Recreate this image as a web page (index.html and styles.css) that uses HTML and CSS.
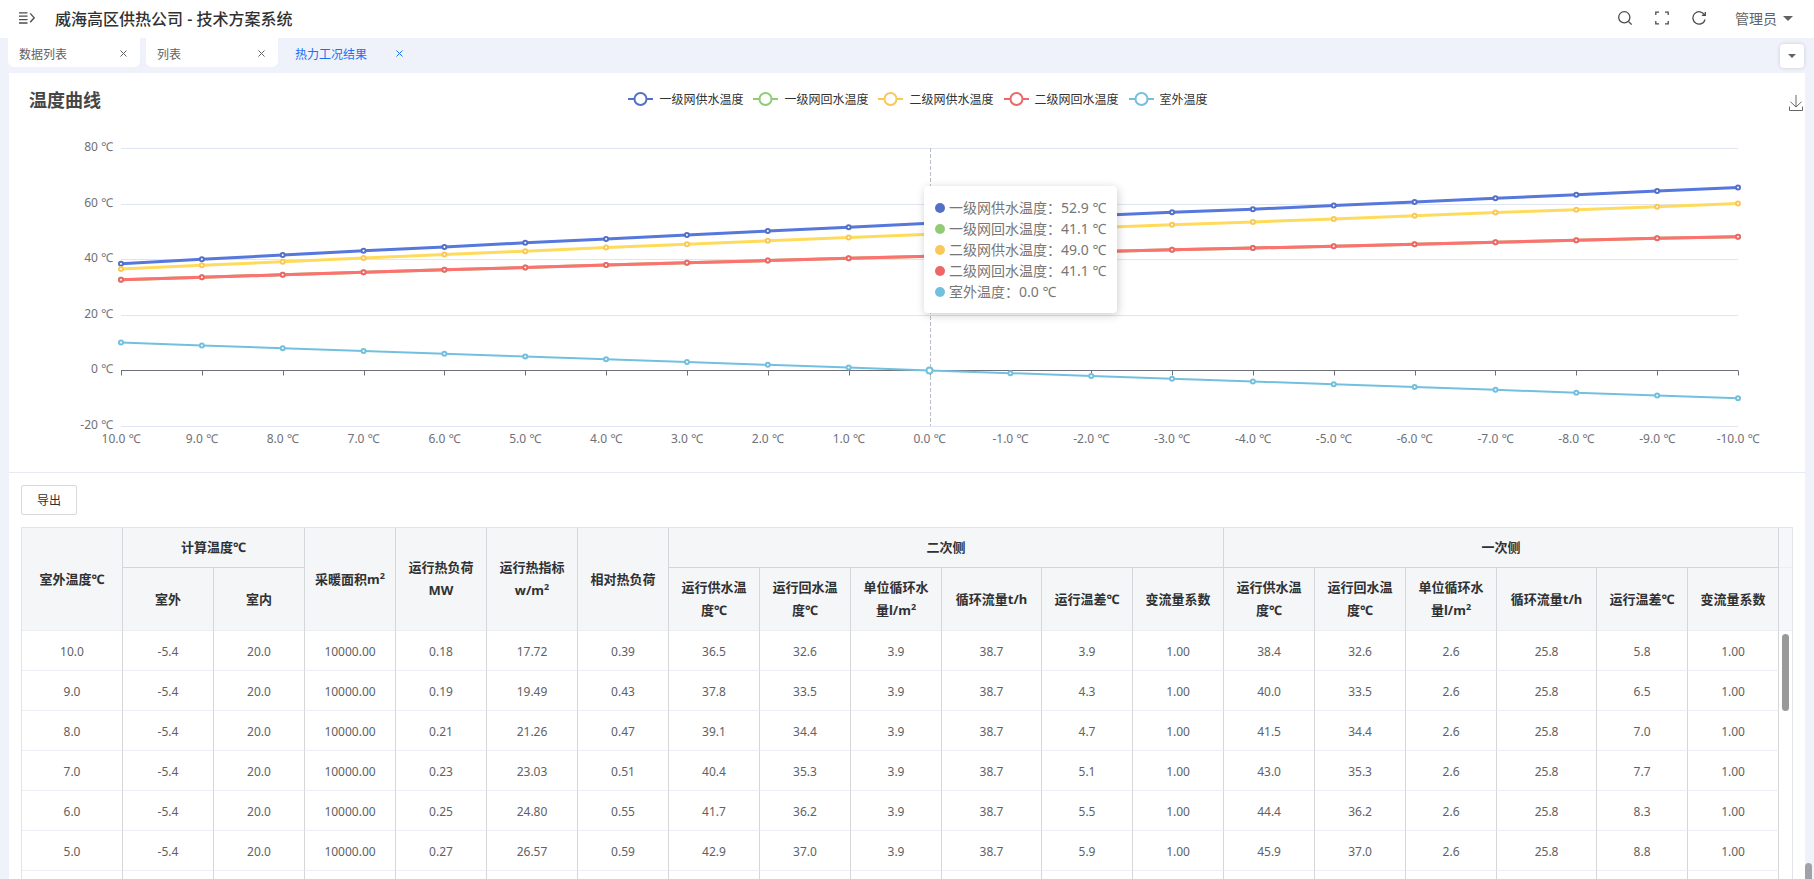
FILE: index.html
```html
<!doctype html>
<html lang="zh-CN">
<head>
<meta charset="utf-8">
<title>威海高区供热公司 - 技术方案系统</title>
<link rel="stylesheet" href="styles.css">
</head>

<body>
	<header class="header">
		<button class="icon-btn" aria-label="展开菜单">
			<svg width="16" height="12" viewBox="0 0 16 12"><path d="M0 .8h8.500M0 4.200h8.500M0 7.600h8.500M0 11h8.500M11.200 1.400l4 4.400-4 4.400"/></svg>
		</button>
		<h1>威海高区供热公司 - 技术方案系统</h1>
		<div class="tools">
			<button class="icon-btn" aria-label="搜索">
				<svg width="14" height="14" viewBox="0 0 14 14"><circle cx="6.300" cy="6.300" r="5.600"/><path d="M10.400 10.400l3.200 3.200"/></svg>
			</button>
			<button class="icon-btn" aria-label="全屏">
				<svg width="14" height="14" viewBox="0 0 14 14"><path d="M.8 4V1.200H4M10 1.200h3.200V4M13.200 10v2.800H10M4 12.800H.8V10"/></svg>
			</button>
			<button class="icon-btn" aria-label="刷新">
				<svg width="14" height="14" viewBox="0 0 14 14"><path d="M12.600 4A6.200 6.200 0 1 0 13.100 8.500M13.300 1v3.400H9.900"/></svg>
			</button>
			<button class="user">管理员<i class="caret"></i></button>
		</div>
	</header>

	<nav class="tabs">
		<div class="tab"><a href="#">数据列表</a><button class="close" aria-label="关闭数据列表"><svg width="7" height="7" viewBox="0 0 7 7"><path d="M.5.5l6 6M6.500.5l-6 6"/></svg></button></div>
		<div class="tab"><a href="#">列表</a><button class="close" aria-label="关闭列表"><svg width="7" height="7" viewBox="0 0 7 7"><path d="M.5.5l6 6M6.500.5l-6 6"/></svg></button></div>
		<div class="tab active"><a href="#">热力工况结果</a><button class="close" aria-label="关闭热力工况结果"><svg width="7" height="7" viewBox="0 0 7 7"><path d="M.5.5l6 6M6.500.5l-6 6"/></svg></button></div>
		<button class="more" aria-label="更多标签"><i class="caret"></i></button>
	</nav>

	<main class="panel">
		<section class="chart">
			<div class="chart-head">
				<h2>温度曲线</h2>
				<ul class="legend" id="legend"></ul>
				<button class="icon-btn download" aria-label="保存为图片">
					<svg width="14" height="16" viewBox="0 0 14 16"><path d="M7 0v12M1.500 6.800L7 12l5.500-5.200M.5 11.500v4h13v-4"/></svg>
				</button>
			</div>
			<svg class="plot" id="plot"></svg>
			<div class="tooltip" id="tooltip"></div>
		</section>

		<section class="result">
			<button class="export">导出</button>
			<div class="table-box">
				<table>
					<colgroup>
						<col class="w-first"><col span="9">
						<col class="w-flow"><col span="5">
						<col class="w-flow"><col span="2">
						<col class="w-bar">
					</colgroup>
					<thead>
						<tr>
							<th rowspan="2">室外温度℃</th>
							<th colspan="2" class="group">计算温度℃</th>
							<th rowspan="2">采暖面积m<sup>2</sup></th>
							<th rowspan="2">运行热负荷MW</th>
							<th rowspan="2">运行热指标w/m<sup>2</sup></th>
							<th rowspan="2">相对热负荷</th>
							<th colspan="6" class="group">二次侧</th>
							<th colspan="6" class="group">一次侧</th>
							<td class="gutter"></td>
						</tr>
						<tr>
							<th>室外</th>
							<th>室内</th>
							<th>运行供水温度℃</th>
							<th>运行回水温度℃</th>
							<th>单位循环水量l/m<sup>2</sup></th>
							<th>循环流量t/h</th>
							<th>运行温差℃</th>
							<th>变流量系数</th>
							<th>运行供水温度℃</th>
							<th>运行回水温度℃</th>
							<th>单位循环水量l/m<sup>2</sup></th>
							<th>循环流量t/h</th>
							<th>运行温差℃</th>
							<th>变流量系数</th>
							<td class="gutter"></td>
						</tr>
					</thead>
					<tbody id="rows"></tbody>
				</table>
				<i class="thumb"></i>
			</div>
		</section>
	</main>
	<i class="page-thumb"></i>

	<script>
	//各曲线数据，室外温度从10到-10
	var series=[
		{name:'一级网供水温度',color:'#5470c6',line:'#5677dc',width:3,
		data:[38.4,40.0,41.5,43.0,44.4,45.9,47.3,48.7,50.1,51.5,52.9,54.2,55.6,56.9,58.0,59.3,60.6,61.9,63.2,64.5,65.8]},
		{name:'一级网回水温度',color:'#91cc75',line:'#91cc75',width:3,
		data:[32.6,33.5,34.4,35.3,36.2,37.0,37.9,38.7,39.5,40.3,41.1,41.9,42.7,43.4,44.0,44.7,45.4,46.1,46.8,47.5,48.1]},
		{name:'二级网供水温度',color:'#fac858',line:'#ffdb5c',width:3,
		data:[36.5,37.8,39.1,40.4,41.7,42.9,44.2,45.4,46.6,47.8,49.0,50.2,51.3,52.4,53.4,54.5,55.6,56.8,57.8,58.9,60.0]},
		{name:'二级网回水温度',color:'#ee6666',line:'#ff7070',width:3,
		data:[32.6,33.5,34.4,35.3,36.2,37.0,37.9,38.7,39.5,40.3,41.1,41.9,42.7,43.4,44.0,44.7,45.4,46.1,46.8,47.5,48.1]},
		{name:'室外温度',color:'#73c0de',line:'#73c0de',width:2,
		data:[10,9,8,7,6,5,4,3,2,1,0,-1,-2,-3,-4,-5,-6,-7,-8,-9,-10]}
	];
	var hover=10;//当前指向的点

	//图例和提示框
	var legend=document.getElementById('legend');
	var tooltip=document.getElementById('tooltip');
	series.forEach(function(s){
		legend.innerHTML+='<li><svg width="25" height="14"><path d="M0 7h25" stroke="'+s.color+'" stroke-width="2"/><circle cx="12.5" cy="7" r="6" fill="#fff" stroke="'+s.color+'" stroke-width="2"/></svg>'+s.name+'</li>';
		tooltip.innerHTML+='<div><i style="background:'+s.color+'"></i>'+s.name+'：'+s.data[hover].toFixed(1)+' ℃</div>';
	});

	var plot=document.getElementById('plot');
	function draw(){
		var left=112,right=plot.clientWidth-67,top=18,h=278;
		var step=(right-left)/20;
		function px(i){ return left+step*i; }
		function py(v){ return top+(80-v)*h/100; }
		var s='';
		for(var v=80;v>=-20;v-=20){
			var y=Math.round(py(v))+0.5;
			if(v!=0) s+='<path d="M'+left+' '+y+'H'+right+'" stroke="#e0e6f1"/>';
			s+='<text x="'+(left-8)+'" y="'+(y+2)+'" text-anchor="end">'+v+' ℃</text>';
		}
		//横轴
		var zero=Math.round(py(0))+0.5;
		s+='<path d="M'+left+' '+zero+'H'+right+'" stroke="#6e7079"/>';
		for(var i=0;i<=20;i++){
			var x=Math.round(px(i))+0.5;
			s+='<path d="M'+x+' '+zero+'v5" stroke="#6e7079"/>';
			s+='<text x="'+px(i)+'" y="'+(top+h+17)+'" text-anchor="middle">'+(10-i).toFixed(1)+' ℃</text>';
		}
		s+='<path d="M'+(Math.round(px(hover))+0.5)+' '+top+'v'+h+'" stroke="#b9bec9" stroke-dasharray="4 2"/>';
		//曲线
		series.forEach(function(item){
			var pts=item.data.map(function(v,i){ return px(i)+','+py(v); });
			s+='<polyline points="'+pts.join(' ')+'" fill="none" stroke="'+item.line+'" stroke-width="'+item.width+'"/>';
			item.data.forEach(function(v,i){
				s+='<circle cx="'+px(i)+'" cy="'+py(v)+'" r="'+(i==hover?3:2)+'" fill="#fff" stroke="'+item.color+'" stroke-width="2"/>';
			});
		});
		plot.innerHTML=s;
	}
	draw();
	window.onresize=draw;

	//表格：负荷、热指标、相对负荷、二次温差、一次温差
	var load=[
		['0.18','17.72','0.39','3.9','5.8'],
		['0.19','19.49','0.43','4.3','6.5'],
		['0.21','21.26','0.47','4.7','7.0'],
		['0.23','23.03','0.51','5.1','7.7'],
		['0.25','24.80','0.55','5.5','8.3'],
		['0.27','26.57','0.59','5.9','8.8'],
		['0.28','28.35','0.63','6.3','9.4']
	];
	var html='';
	load.forEach(function(r,i){
		var back=series[1].data[i].toFixed(1);
		var cells=[(10-i).toFixed(1),'-5.4','20.0','10000.00',r[0],r[1],r[2],
			series[2].data[i].toFixed(1),back,'3.9','38.7',r[3],'1.00',
			series[0].data[i].toFixed(1),back,'2.6','25.8',r[4],'1.00'];
		html+='<tr><td>'+cells.join('</td><td>')+'</td></tr>';
	});
	document.getElementById('rows').innerHTML=html;
	</script>
</body>
</html>
```
FILE: styles.css
```css
*{
	box-sizing: border-box;
}
body{
	margin: 0;
	height: 100vh;
	overflow: hidden;
	display: flex;
	flex-direction: column;
	background: #eff2fb;
	color: #606266;
	font-family: "Noto Sans", "Noto Sans CJK SC", sans-serif;
	font-size: 12px;
}
button{
	border: 0;
	padding: 0;
	background: none;
	color: inherit;
	font: inherit;
	cursor: pointer;
}
a{
	color: inherit;
	text-decoration: none;
}
h1, h2, ul{
	margin: 0;
	padding: 0;
}
svg{
	display: block;
}

/* 顶栏 */
.header{
	flex: none;
	display: flex;
	align-items: center;
	height: 38px;
	padding: 0 21px 2px 19px;
	background: #fff;
}
.header h1{
	margin-left: 20px;
	font-size: 16px;
	font-weight: 500;
	color: #303133;
}
.icon-btn svg, .close svg{
	fill: none;
	stroke: #4a4c50;
	stroke-width: 1.3;
}
.tools{
	display: flex;
	align-items: center;
	gap: 23px;
	margin-left: auto;
}
.user{
	display: flex;
	align-items: center;
	gap: 6px;
	margin-left: 6px;
	font-size: 14px;
}
.caret{
	border: 5px solid transparent;
	border-top-color: #606266;
	border-bottom: 0;
}

/* 标签页 */
.tabs{
	flex: none;
	display: flex;
	gap: 6px;
	height: 35px;
	padding: 0 10px 0 8px;
}
.tab{
	display: flex;
	align-items: center;
	justify-content: space-between;
	width: 132px;
	height: 29px;
	padding: 2px 13px 0 11px;
	background: #fff;
	border-radius: 0 0 6px 6px;
}
.tab.active{
	background: none;
	color: #1c6ef3;
}
.close svg{
	stroke: currentColor;
	stroke-width: 1;
}
.more{
	display: flex;
	align-items: center;
	justify-content: center;
	width: 24px;
	height: 24px;
	margin: 6px 0 0 auto;
	background: #fff;
	border-radius: 4px;
	box-shadow: 0 0 4px rgba(0,0,0,.15);
}
.more .caret{
	border-width: 4px 4px 0;
}

.panel{
	flex: 1;
	min-height: 0;
	display: flex;
	flex-direction: column;
	margin: 0 9px;
	background: #fff;
}

/* 曲线图 */
.chart{
	flex: none;
	position: relative;
	border-bottom: 1px solid #e8eaf2;
}
.chart-head{
	display: grid;
	grid-template-columns: 1fr auto 1fr;
	align-items: center;
	height: 57px;
	padding: 0 2px 5px 20px;
}
.chart-head h2{
	font-size: 18px;
	font-weight: bold;
	color: #464646;
}
.legend{
	display: flex;
	gap: 10px;
	padding-left: 4px;
	list-style: none;
	color: #333;
}
.legend li{
	display: flex;
	align-items: center;
	gap: 6px;
}
.download{
	justify-self: end;
	padding-top: 8px;
}
.download svg{
	stroke: #666;
	stroke-width: 1;
}
.plot{
	width: 100%;
	height: 342px;
	fill: #6e7079;
	font-size: 12px;
}
.tooltip{
	position: absolute;
	left: calc(50% + 17px);
	top: 113px;
	padding: 11px;
	background: #fff;
	border-radius: 4px;
	box-shadow: 1px 2px 10px rgba(0,0,0,.2);
	color: #777;
	font-size: 14px;
	line-height: 21px;
	white-space: nowrap;
}
.tooltip i{
	display: inline-block;
	width: 10px;
	height: 10px;
	margin-right: 4px;
	border-radius: 50%;
}

/* 结果表格 */
.result{
	flex: 1;
	min-height: 0;
	display: flex;
	flex-direction: column;
	align-items: flex-start;
	padding: 12px 12px 0;
}
.export{
	flex: none;
	width: 56px;
	height: 30px;
	margin-bottom: 12px;
	border: 1px solid #d8d9dc;
	border-radius: 2px;
	color: #303133;
}
.table-box{
	position: relative;
	flex: 1;
	min-height: 0;
	width: 100%;
	overflow: hidden;
	border: 1px solid #e2e4e8;
	border-bottom: 0;
}
table{
	width: 100%;
	table-layout: fixed;
	border-collapse: separate;
	border-spacing: 0;
	text-align: center;
}
col{
	width: 91px;
}
.w-first{
	width: 101px;
}
.w-flow{
	width: 100px;
}
.w-bar{
	width: 14px;
}
th, td{
	height: 40px;
	padding: 2px 8px 0;
	border-right: 1px solid #d5d6d9;
	border-bottom: 1px solid #ebeef5;
}
th{
	padding: 8px;
	background: #f5f6f8;
	color: #303133;
	font-size: 13px;
	line-height: 23px;
}
th.group{
	border-bottom-color: #d5d6d9;
}
sup{
	font-size: 9px;
	line-height: 0;
}
.gutter{
	padding: 0;
	background: #f5f7fa;
	border-right: 0;
}
.thumb{
	position: absolute;
	top: 106px;
	right: 3px;
	width: 7px;
	height: 77px;
	background: #999;
	border-radius: 4px;
}
.page-thumb{
	position: absolute;
	right: 2px;
	bottom: 0;
	width: 7px;
	height: 16px;
	background: #a0a2a8;
	border-radius: 4px 4px 0 0;
}
```
